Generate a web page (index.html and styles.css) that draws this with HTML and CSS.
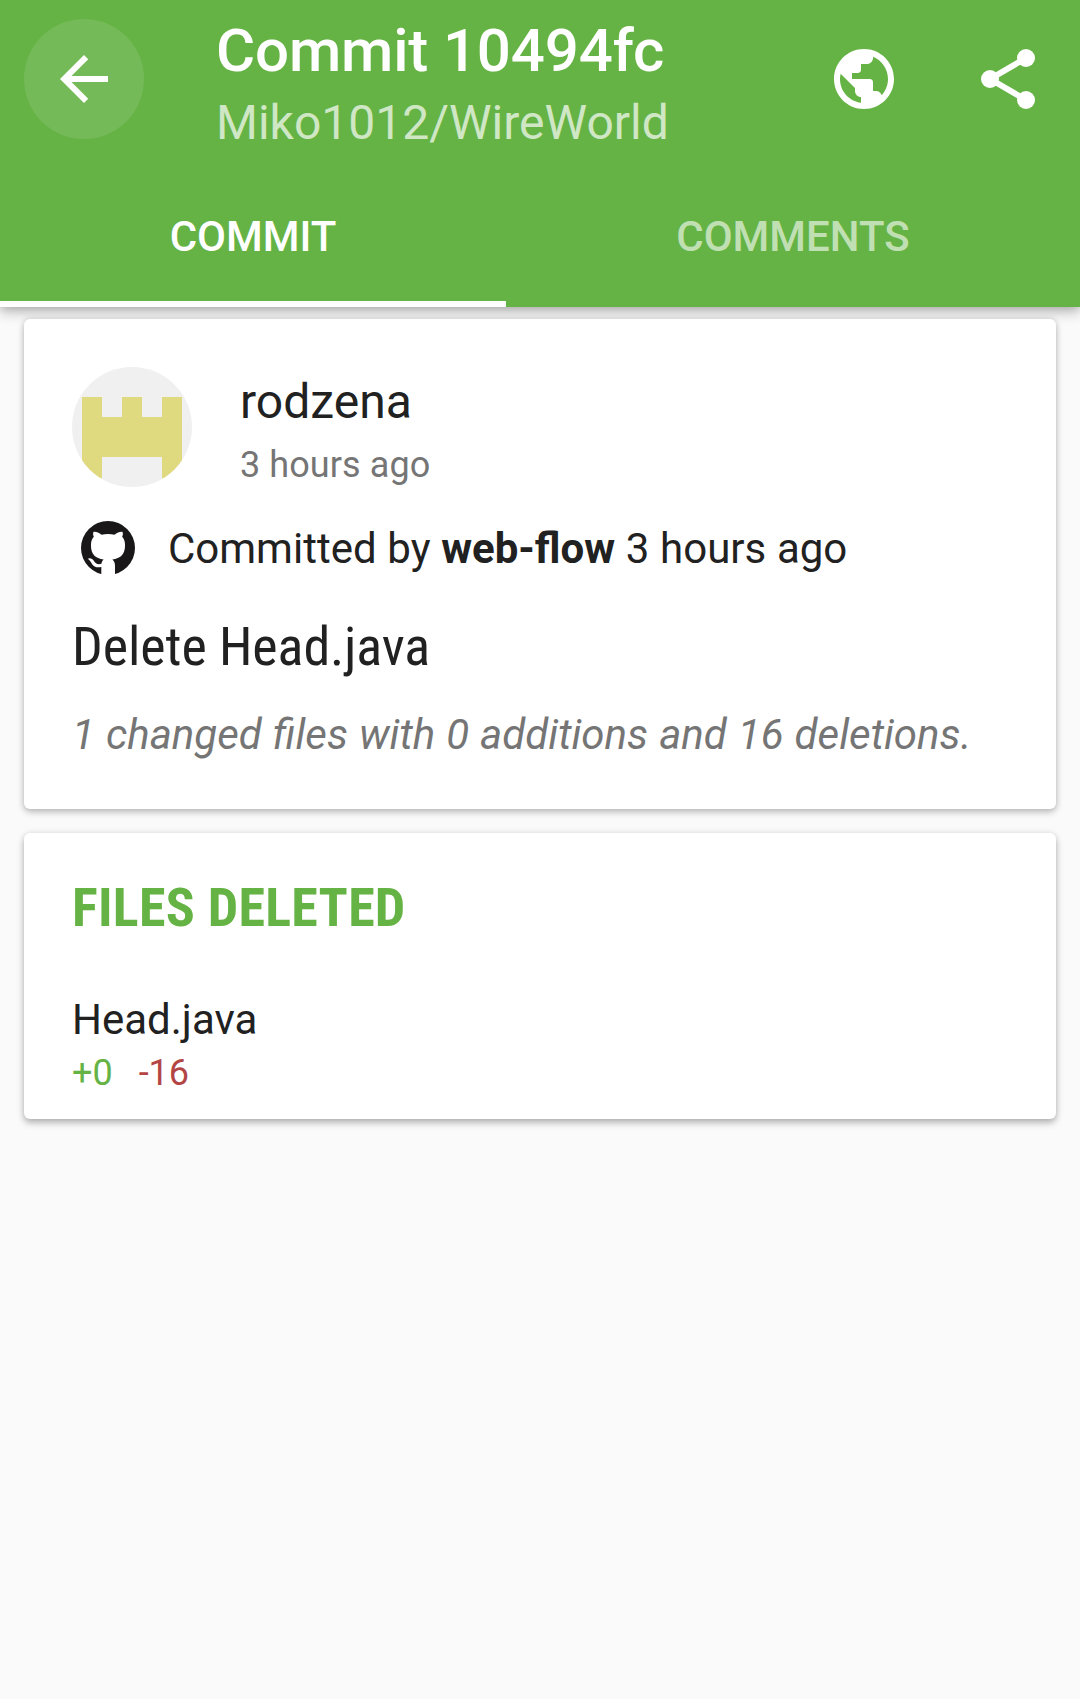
FILE: index.html
```html
<!DOCTYPE html>
<html lang="en">
<head>
<meta charset="utf-8">
<title>Commit 10494fc</title>
<link rel="stylesheet" href="styles.css">
</head>
<body>
<header class="appbar">
  <div class="toolbar">
    <button class="back" aria-label="Back">
      <svg class="icon" viewBox="0 0 24 24"><path d="M20 11H7.83l5.59-5.59L12 4l-8 8 8 8 1.41-1.41L7.83 13H20v-2z"/></svg>
    </button>
    <div class="titles">
      <h1 class="title">Commit 10494fc</h1>
      <p class="subtitle">Miko1012/WireWorld</p>
    </div>
    <div class="actions">
      <svg class="icon" viewBox="0 0 24 24"><path d="M12 2C6.48 2 2 6.48 2 12s4.48 10 10 10 10-4.48 10-10S17.520 2 12 2zm-1 17.930c-3.950-.49-7-3.850-7-7.930 0-.62.080-1.210.210-1.790L9 15v1c0 1.100.9 2 2 2v1.930zm6.900-2.540c-.26-.81-1-1.390-1.900-1.390h-1v-3c0-.55-.45-1-1-1H8v-2h2c.55 0 1-.45 1-1V7h2c1.100 0 2-.9 2-2v-.41c2.930 1.190 5 4.060 5 7.410 0 2.080-.8 3.970-2.100 5.390z"/></svg>
      <svg class="icon" viewBox="0 0 24 24"><path d="M6 12 18 5M6 12l12 7" fill="none" stroke="currentColor" stroke-width="2"/><circle cx="18" cy="5" r="3"/><circle cx="6" cy="12" r="3"/><circle cx="18" cy="19" r="3"/></svg>
    </div>
  </div>
  <nav class="tabs">
    <a class="tab active">COMMIT</a>
    <a class="tab">COMMENTS</a>
  </nav>
</header>
<main class="content">
  <section class="card commit">
    <div class="author">
      <svg class="avatar" viewBox="0 0 120 120">
        <clipPath id="round"><circle cx="60" cy="60" r="60"/></clipPath>
        <g clip-path="url(#round)">
          <path fill="#f0f0f0" d="M0 0h120v120H0z"/>
          <path fill="#dfd97f" d="M10 30h20v20h20V30h20v20h20V30h20v81H90V90H30v21H10z"/>
        </g>
      </svg>
      <div>
        <p class="name">rodzena</p>
        <p class="time">3 hours ago</p>
      </div>
    </div>
    <div class="committer">
      <svg class="octocat" viewBox="0 0 16 16">
        <circle cx="8" cy="8" r="8"/>
        <path fill="#fff" d="M6.020 16V13.600C4.800 13.900 3.800 13.600 3.300 12.800 2.900 12.100 2.500 11.600 2 11.200 2.600 10.800 3.400 11.100 3.800 11.800 4.300 12.700 5 13 6.050 12.700 6.100 12.200 6.300 11.800 6.700 11.400 4.300 11.100 2.950 10 2.950 7.200 2.950 6.200 3.200 5.400 3.800 4.700 3.550 4.200 3.500 3.600 3.750 3.200 4.500 3.100 5.300 3.500 6.100 4.050 7.300 3.750 8.700 3.750 9.900 4.050 10.700 3.500 11.500 3.100 12.250 3.200 12.500 3.600 12.450 4.200 12.200 4.700 12.800 5.400 13.050 6.200 13.050 7.200 13.050 10 11.700 11.100 9.300 11.400 9.800 11.800 10.070 12.400 10.070 13.200V16z"/>
      </svg>
      <p>Committed by <b>web-flow</b> 3 hours ago</p>
    </div>
    <h2 class="message">Delete Head.java</h2>
    <p class="summary">1 changed files with 0 additions and 16 deletions.</p>
  </section>
  <section class="card files">
    <h2 class="section-title">FILES DELETED</h2>
    <p class="filename">Head.java</p>
    <p class="stats"><span class="added">+0</span><span class="removed">-16</span></p>
  </section>
</main>
</body>
</html>
```
FILE: styles.css
```css
* { box-sizing: border-box; }

body {
  margin: 0;
  min-height: 1699px;
  background: #fafafa;
  color: #212121;
  font-family: Roboto, sans-serif;
  font-size: 42px;
  line-height: 50px;
}

h1, h2, p { margin: 0; font-weight: 400; white-space: nowrap; }

.appbar {
  height: 307px;
  background: #66b345;
  color: #fff;
  box-shadow: 0 5px 12px rgba(0, 0, 0, .27), 0 0 8px rgba(0, 0, 0, .1);
}

.toolbar { display: flex; height: 163px; padding: 0 36px 0 24px; }

.back {
  width: 120px;
  height: 120px;
  margin-top: 19px;
  padding: 24px;
  border: 0;
  border-radius: 50%;
  background: #75ba58;
  color: inherit;
}

.icon { display: block; width: 72px; height: 72px; fill: currentColor; }

.titles { flex: 1; padding: 16px 0 0 72px; }
.title { font-size: 60px; font-weight: 500; line-height: 70px; letter-spacing: -.15px; }
.subtitle { margin-top: 9px; font-size: 48px; line-height: 56px; color: rgba(255, 255, 255, .7); }

.actions { display: flex; gap: 72px; padding-top: 43px; }

.tabs { display: grid; grid-template-columns: 506px 1fr; height: 144px; }

.tab {
  padding-top: 49px;
  border-bottom: 6px solid transparent;
  font-weight: 500;
  text-align: center;
  color: rgba(255, 255, 255, .6);
}
.tab.active { border-color: #fff; color: #fff; }

.content { display: grid; gap: 24px; padding: 12px 24px; }

.card {
  padding: 48px;
  border-radius: 6px;
  background: #fff;
  box-shadow: 0 3px 7px rgba(0, 0, 0, .24), 0 0 6px rgba(0, 0, 0, .1);
}
.commit { height: 490px; }
.files { height: 286px; padding-top: 43px; box-shadow: 0 4px 7px rgba(0, 0, 0, .26), 0 0 6px rgba(0, 0, 0, .1); }

.author { display: flex; gap: 48px; height: 120px; }
.avatar { width: 120px; height: 120px; }
.name { padding-top: 7px; font-size: 48px; line-height: 56px; }
.time { padding-top: 14px; font-size: 36px; line-height: 42px; letter-spacing: .08px; color: #757575; }

.committer { display: flex; gap: 33px; margin-top: 37px; word-spacing: .25px; }
.octocat { width: 54px; height: 54px; margin: -3px 0 0 9px; fill: #191717; }

.message, .section-title {
  font-family: "Roboto Condensed", Roboto, sans-serif;
  font-size: 54px;
  font-stretch: 75%;
  line-height: 64px;
}
.message { margin-top: 40px; letter-spacing: -.08px; }
.summary { margin-top: 31px; font-style: italic; word-spacing: .7px; color: #757575; }

.section-title { font-weight: 700; letter-spacing: .25px; color: #66b345; }
.filename { margin-top: 55px; }
.stats { display: flex; gap: 26px; font-size: 36px; line-height: 42px; margin-top: 7px; }
.added { color: #66b345; }
.removed { color: #b34545; }
```
